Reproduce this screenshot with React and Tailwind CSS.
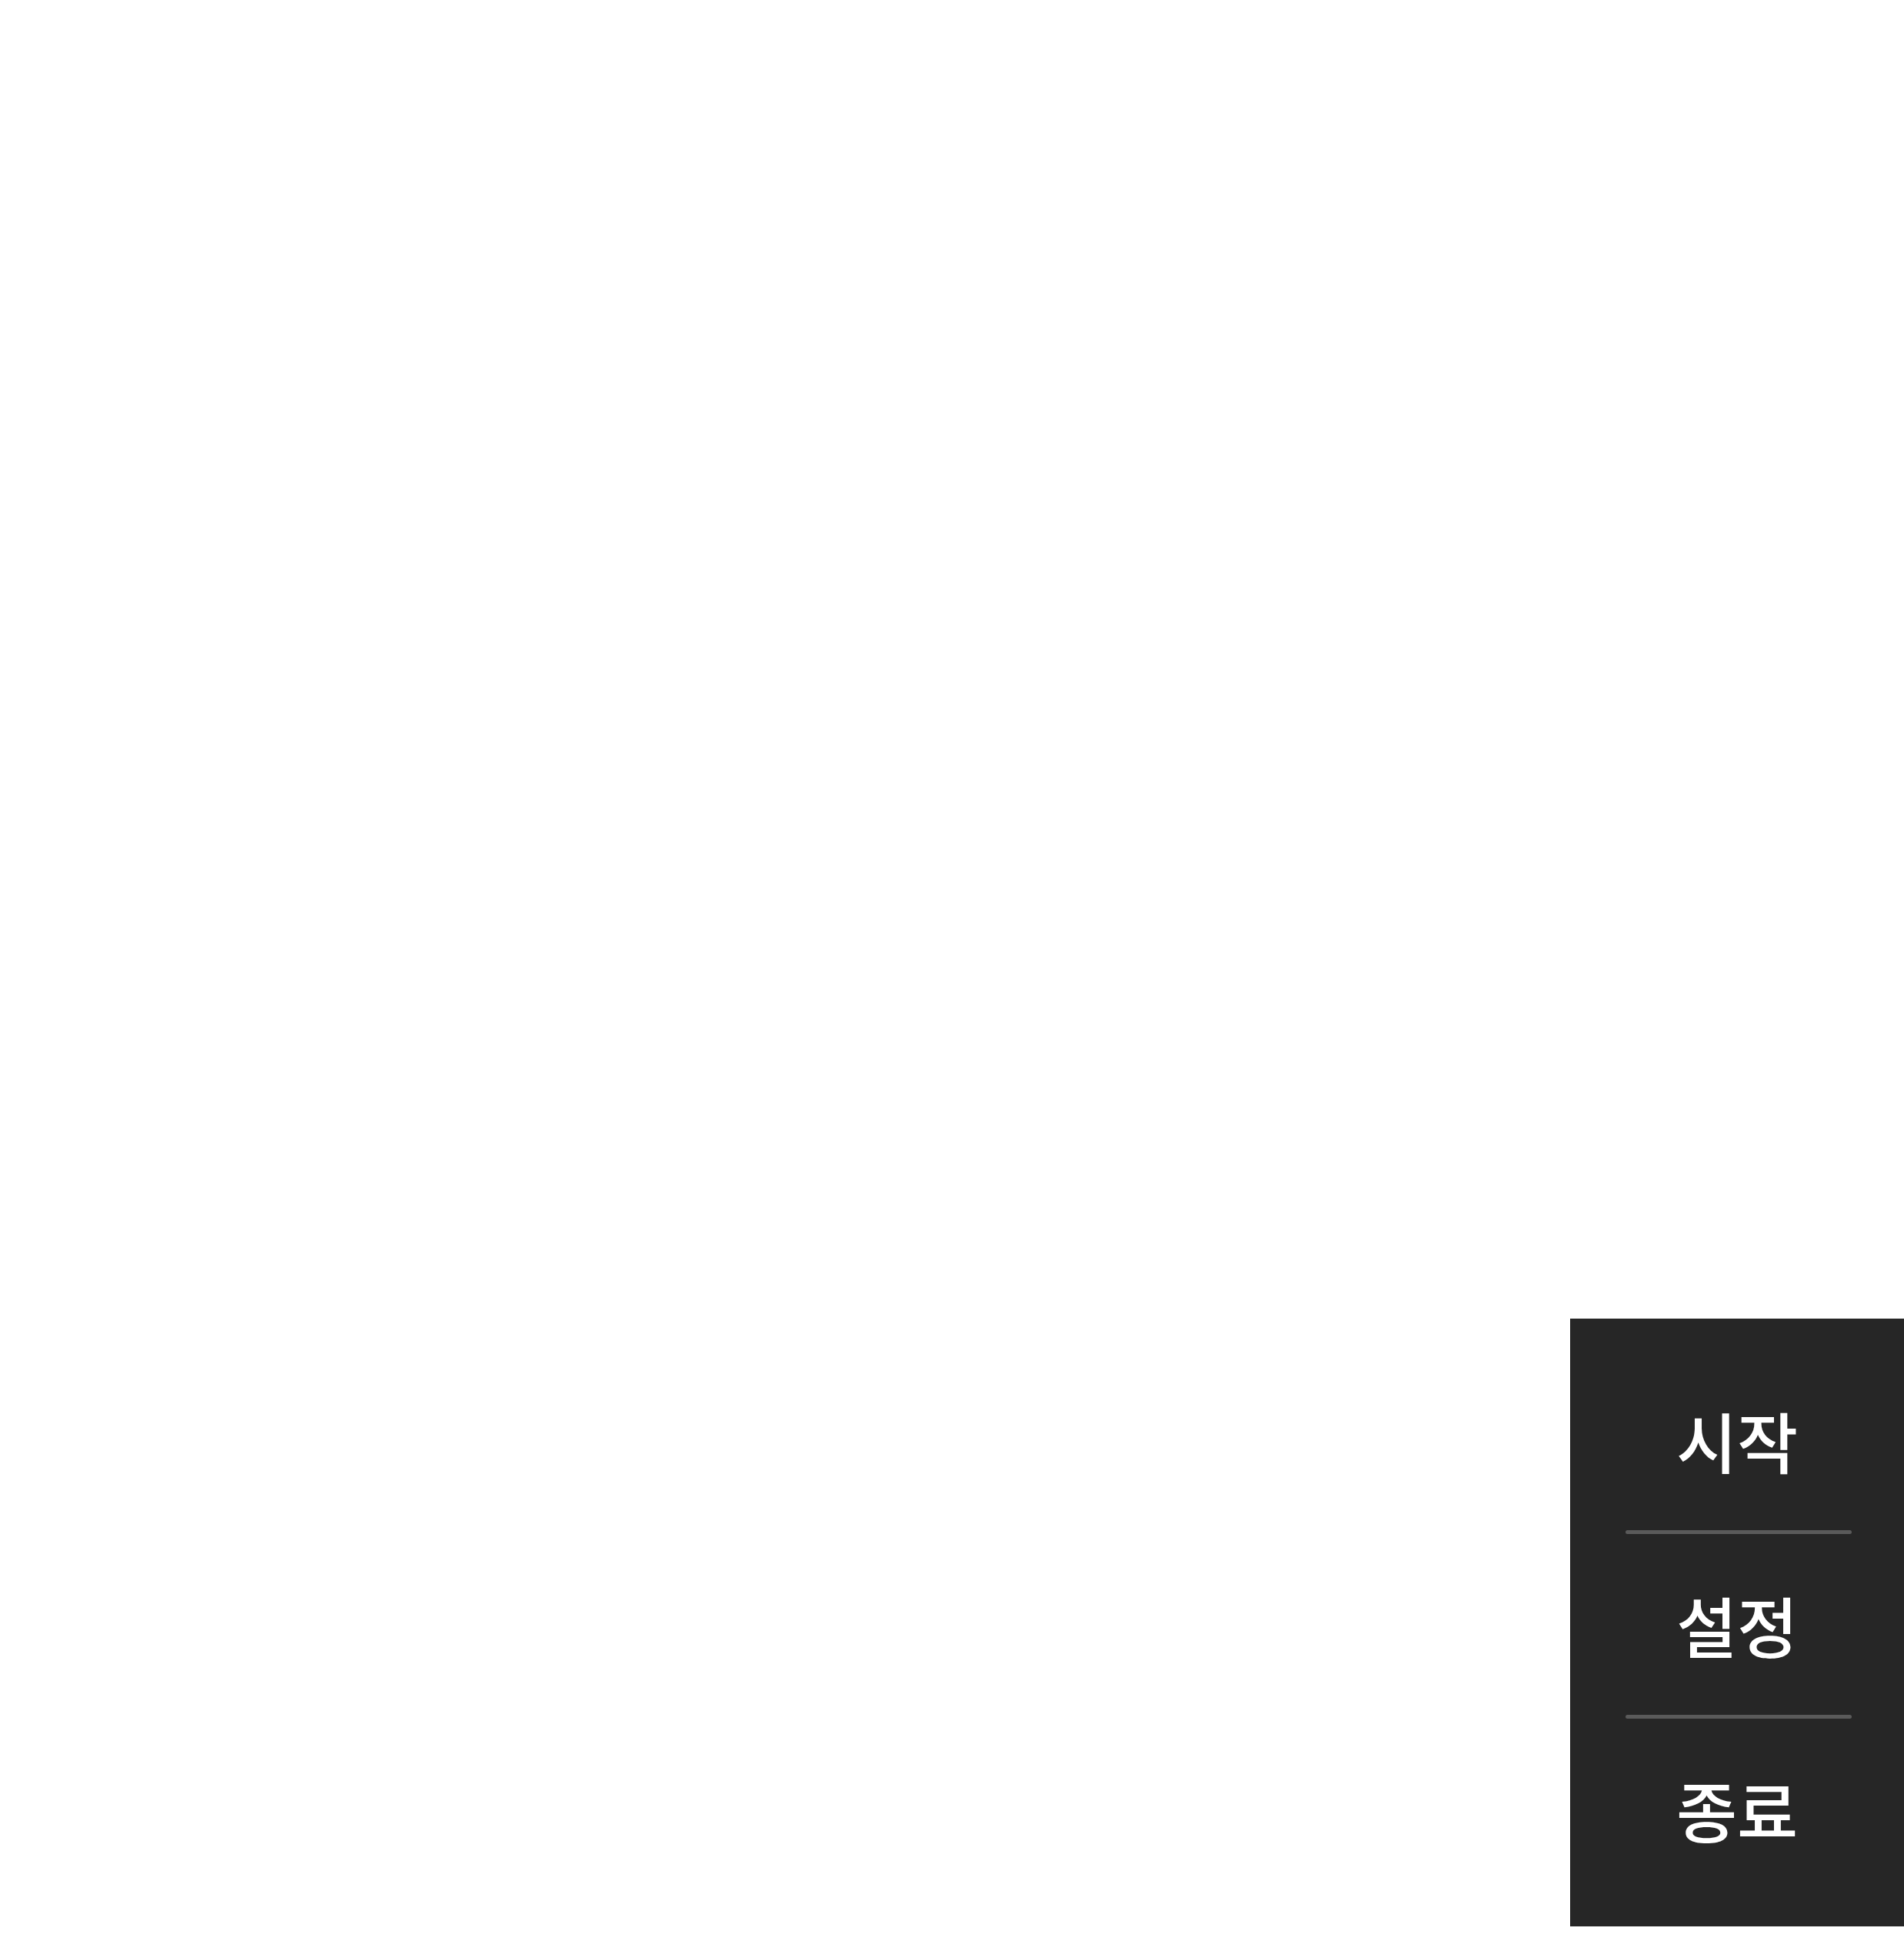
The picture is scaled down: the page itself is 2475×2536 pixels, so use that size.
export default function App() {
  const items = ['시작', '설정', '종료'];

  return (
    <div className="h-screen w-full bg-white flex items-end justify-end pb-8">
      <div className="w-[434px] h-[790px] bg-[#262626] flex flex-col pt-[40px] pb-[34px] font-['Noto_Sans_CJK_KR',sans-serif]">
        {items.map((label, i) => (
          <div key={label} className="flex flex-col">
            {i > 0 && <div className="h-[5px] ml-[72px] mr-[68px] rounded-full bg-[#5a5a5a]" />}
            <button className="h-[235px] flex items-center justify-center text-white text-[86px] font-medium leading-none">
              {label}
            </button>
          </div>
        ))}
      </div>
    </div>
  );
}
